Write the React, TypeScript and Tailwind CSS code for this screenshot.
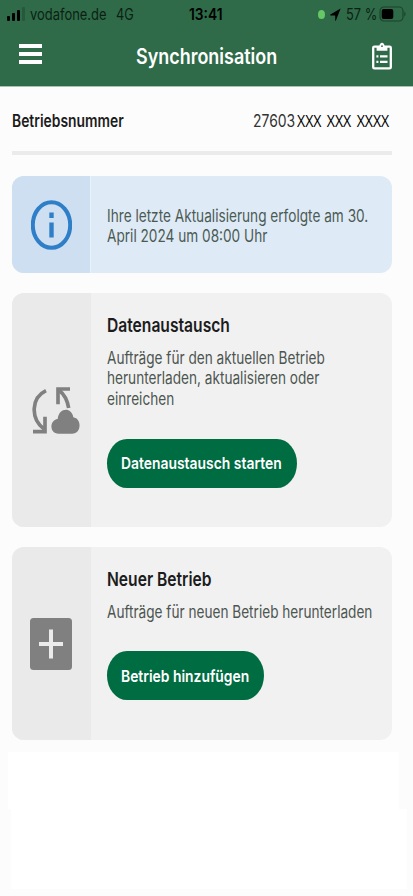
import React from 'react'
import clsx from 'clsx'

type LabelProps = {
  children: React.ReactNode
  className?: string
}

// narrow system-like lettering
const Label = ({ children, className }: LabelProps) => (
  <span className={clsx('block w-fit origin-left whitespace-nowrap', className)}>{children}</span>
)

const StatusBar = () => (
  <div className="flex h-7 items-center text-[15.5px] leading-7 text-[#0c1f14]">
    <div className="flex w-[30px] items-end gap-[2px] pl-[7px]">
      <i className="h-[5px] w-[3px] rounded-[1px] bg-black" />
      <i className="h-[8px] w-[3px] rounded-[1px] bg-black" />
      <i className="h-[11px] w-[3px] rounded-[1px] bg-black" />
      <i className="h-[14px] w-[3px] rounded-[1px] bg-[#26583b]" />
    </div>
    <div className="w-[86px] pt-px">
      <Label className="scale-x-[0.835]">vodafone.de</Label>
    </div>
    <div className="w-[73px] pt-px">
      <Label className="scale-x-[0.82]">4G</Label>
    </div>
    <div className="w-[129px] pt-px">
      <Label className="scale-x-[0.89] font-semibold text-black">13:41</Label>
    </div>
    <i className="h-[9px] w-[7px] rounded-[50%] bg-[#66c766]" />
    <svg className="ml-[5px] h-[13px] w-[11px]" viewBox="0 0 11 13" fill="#000">
      <path d="M10.6.5.4 6.6c-.4.3-.3.8.2.8h4.6v5c0 .6.5.6.7.1Z" />
    </svg>
    <div className="ml-[5px] w-[33px] pt-px">
      <Label className="scale-x-[0.83]">57 %</Label>
    </div>
    <svg className="h-4 w-[27px]" viewBox="0 0 27 16" fill="none">
      <rect x="1" y="1" width="23" height="14" rx="4" stroke="#1b442b" strokeWidth="1.2" />
      <rect x="2.7" y="3" width="11.6" height="10" rx="2" fill="#000" />
      <path d="M25.3 5.5c1.7.8 1.7 4.2 0 5Z" fill="#1b442b" />
    </svg>
  </div>
)

const ClipboardIcon = () => (
  <svg className="mb-[3px] h-[28px] w-5" viewBox="0 0 20 28" fill="none" stroke="#fff">
    <rect x="1.2" y="4.6" width="17.6" height="21.8" rx="1.2" strokeWidth="2.3" />
    <path d="M4.6 8.7V4.2h2.7C7.6 2 8.6.8 10 .8s2.4 1.2 2.7 3.4h2.7v4.5Z" fill="#fff" stroke="none" />
    <circle cx="10" cy="4.2" r=".9" fill="#2f6b48" stroke="none" />
    <path d="M4.4 14.4h2M4.4 19.8h2M8 14.4h7.5M8 19.8h7.5" strokeWidth="2.3" />
  </svg>
)

const InfoIcon = () => (
  <svg className="h-[50px] w-[41px]" viewBox="0 0 41 50" fill="none" stroke="#2f7fc8">
    <ellipse cx="20.5" cy="25" rx="18.7" ry="22.8" strokeWidth="4" />
    <path d="M20.5 12.5v5.5M20.5 22.5v15" strokeWidth="4.4" />
  </svg>
)

const SyncIcon = () => (
  <svg className="ml-2 h-12 w-12" viewBox="36 33 144 144" fill="none" stroke="#808080" strokeWidth="11">
    <path d="M78 47C34 68 30 130 72 162" />
    <path d="M75 125v45H39" />
    <path d="M150 42h-36v46" />
    <path d="M117 46c16 12 25 30 29 53" />
    <path
      d="M116 176c-28 0-29-40-3-44 4-36 42-36 47-5 26 4 25 49-4 49Z"
      fill="#808080"
      stroke="none"
    />
  </svg>
)

const PlusIcon = () => (
  <svg className="mr-[2px] h-[52px] w-[42px]" viewBox="0 0 42 52">
    <rect width="42" height="52" rx="3.5" fill="#808080" />
    <path d="M9 26h24M21 11.5v29" stroke="#ebebeb" strokeWidth="4" />
  </svg>
)

type CardProps = {
  icon: React.ReactNode
  title: string
  lines: string[]
  action: string
  className: string
  buttonClass: string
}

const Card = ({ icon, title, lines, action, className, buttonClass }: CardProps) => (
  <section className={clsx('flex overflow-hidden rounded-xl bg-[#f1f1f1]', className)}>
    <div className="flex w-[79px] shrink-0 items-center justify-center bg-[#eaeaea]">{icon}</div>
    <div className="pl-4 pt-[22px]">
      <h2 className="text-[19px] leading-[22px] font-semibold text-[#1c1c1c]">
        <Label className="scale-x-[0.822]">{title}</Label>
      </h2>
      <div className="mt-[11px] text-[17px] leading-[20.4px] text-[#4c554f]">
        {lines.map((line) => (
          <Label key={line} className="scale-x-[0.801]">{line}</Label>
        ))}
      </div>
      <button
        className={clsx(
          'block h-[49px] rounded-[20px/24.5px] bg-[#006c42] pt-px pl-[14px] text-[16.5px] font-semibold text-white',
          buttonClass,
        )}
      >
        <Label className="scale-x-[0.842]">{action}</Label>
      </button>
    </div>
  </section>
)

const App = () => {
  return (
    <div className="h-[896px] w-[413px] overflow-hidden bg-[#fcfcfc] font-[Inter,sans-serif]">
      <header className="h-[87px] border-b border-[#a9c0b2] bg-[#2f6b48]">
        <StatusBar />
        <div className="flex h-[58px] items-center pl-[19px]">
          <div className="mb-[6px] flex w-[117px] flex-col gap-1">
            <i className="h-1 w-[23px] bg-white" />
            <i className="h-1 w-[23px] bg-white" />
            <i className="h-1 w-[23px] bg-white" />
          </div>
          <h1 className="w-[236px] text-[21px] font-semibold text-white">
            <Label className="scale-x-[0.855]">Synchronisation</Label>
          </h1>
          <ClipboardIcon />
        </div>
      </header>

      <main className="pr-[21px] pl-3">
        <div className="flex h-[64px] items-center pt-[5px] text-[17px]">
          <div className="w-[241px] shrink-0">
            <Label className="scale-x-[0.816] font-semibold text-[#1c1c1c]">Betriebsnummer</Label>
          </div>
          <div className="w-[44px] shrink-0 text-[#333]">
            <Label className="scale-x-[0.82]">27603</Label>
          </div>
          <div className="w-[95px] shrink-0 pb-px font-[Open_Sans,sans-serif] text-[16px] font-medium text-black">
            <Label className="scale-x-[0.88] [word-spacing:2px]">XXX XXX XXXX</Label>
          </div>
        </div>
        <div className="h-1 bg-[#ebebeb]" />

        <section className="mt-[21px] flex h-[97px] overflow-hidden rounded-xl bg-[#deeaf6]">
          <div className="flex w-[79px] shrink-0 items-center justify-center border-r border-[#e9f2fa] bg-[#cddff0]">
            <InfoIcon />
          </div>
          <div className="pt-[30px] pl-4 text-[17px] leading-5 text-[#4c5a54]">
            <Label className="scale-x-[0.802]">Ihre letzte Aktualisierung erfolgte am 30.</Label>
            <Label className="scale-x-[0.802]">April 2024 um 08:00 Uhr</Label>
          </div>
        </section>

        <Card
          className="mt-5 h-[234px]"
          icon={<SyncIcon />}
          title="Datenaustausch"
          lines={['Aufträge für den aktuellen Betrieb', 'herunterladen, aktualisieren oder', 'einreichen']}
          action="Datenaustausch starten"
          buttonClass="mt-[29.5px] w-[190px]"
        />
        <Card
          className="mt-5 h-[193px]"
          icon={<PlusIcon />}
          title="Neuer Betrieb"
          lines={['Aufträge für neuen Betrieb herunterladen']}
          action="Betrieb hinzufügen"
          buttonClass="mt-[29px] w-[157px]"
        />
      </main>

      <div className="mt-3 ml-2 h-[57px] w-[391px] bg-white" />
      <div className="ml-[11px] h-20 w-[396px] bg-white" />
    </div>
  )
}

export default App
